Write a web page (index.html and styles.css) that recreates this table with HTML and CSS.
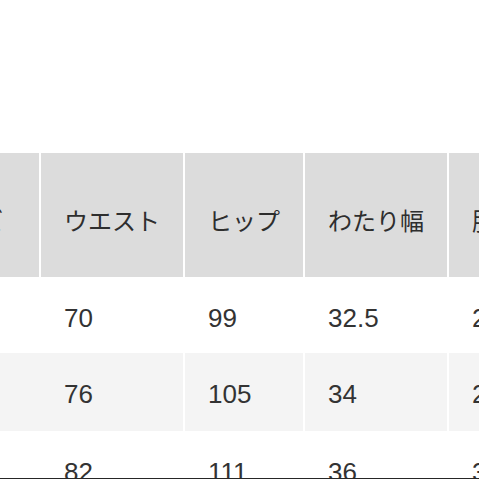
FILE: index.html
```html
<!DOCTYPE html>
<html lang="ja">
<head>
<meta charset="utf-8">
<title>サイズ表</title>
<link rel="stylesheet" href="styles.css">
</head>
<body>
<div class="frame">
  <div class="table">
    <div class="row head">
      <div class="cell first"><span>サイズ</span></div>
      <div class="cell">ウエスト</div>
      <div class="cell">ヒップ</div>
      <div class="cell">わたり幅</div>
      <div class="cell">股下</div>
    </div>
    <div class="row body r1">
      <div class="cell first"><span>S</span></div>
      <div class="cell">70</div>
      <div class="cell">99</div>
      <div class="cell">32.5</div>
      <div class="cell">28</div>
    </div>
    <div class="row body r2 alt">
      <div class="cell first"><span>M</span></div>
      <div class="cell">76</div>
      <div class="cell">105</div>
      <div class="cell">34</div>
      <div class="cell">29</div>
    </div>
    <div class="row body r3">
      <div class="cell first"><span>L</span></div>
      <div class="cell">82</div>
      <div class="cell">111</div>
      <div class="cell">36</div>
      <div class="cell">30</div>
    </div>
  </div>
</div>
</body>
</html>
```

FILE: styles.css
```css
html, body {
  margin: 0;
  padding: 0;
  background: #ffffff;
}

.frame {
  box-sizing: border-box;
  width: 479px;
  height: 479px;
  padding-top: 153px;
  overflow: hidden;
  border-bottom: 1px solid #262626;
  font-family: "Liberation Sans", "Noto Sans CJK JP", sans-serif;
  color: #333333;
}

.table {
  display: flex;
  flex-direction: column;
}

.row {
  display: grid;
  grid-template-columns: 39px 142px 118px 142px 1fr;
  column-gap: 2px;
  background: #ffffff;
}

.cell {
  box-sizing: border-box;
  padding-left: 23px;
  white-space: nowrap;
  overflow: hidden;
}

.first {
  padding-left: 0;
  display: flex;
  justify-content: flex-end;
  padding-right: 36px;
}

.head {
  height: 124px;
}

.head .cell {
  background: #dcdcdc;
  display: flex;
  align-items: center;
  padding-top: 10px;
  font-family: "Noto Sans CJK JP", sans-serif;
  font-size: 24px;
  line-height: 30px;
  color: #2e2e2e;
}

.head .first {
  justify-content: flex-end;
}

.body .cell {
  font-size: 26px;
  line-height: 30px;
  padding-top: 26px;
}

.body .first {
  padding-right: 60px;
}

.r1 {
  height: 76px;
}

.r2 {
  height: 78px;
}

.r3 {
  height: 100px;
}

.alt .cell {
  background: #f4f4f4;
}
```
